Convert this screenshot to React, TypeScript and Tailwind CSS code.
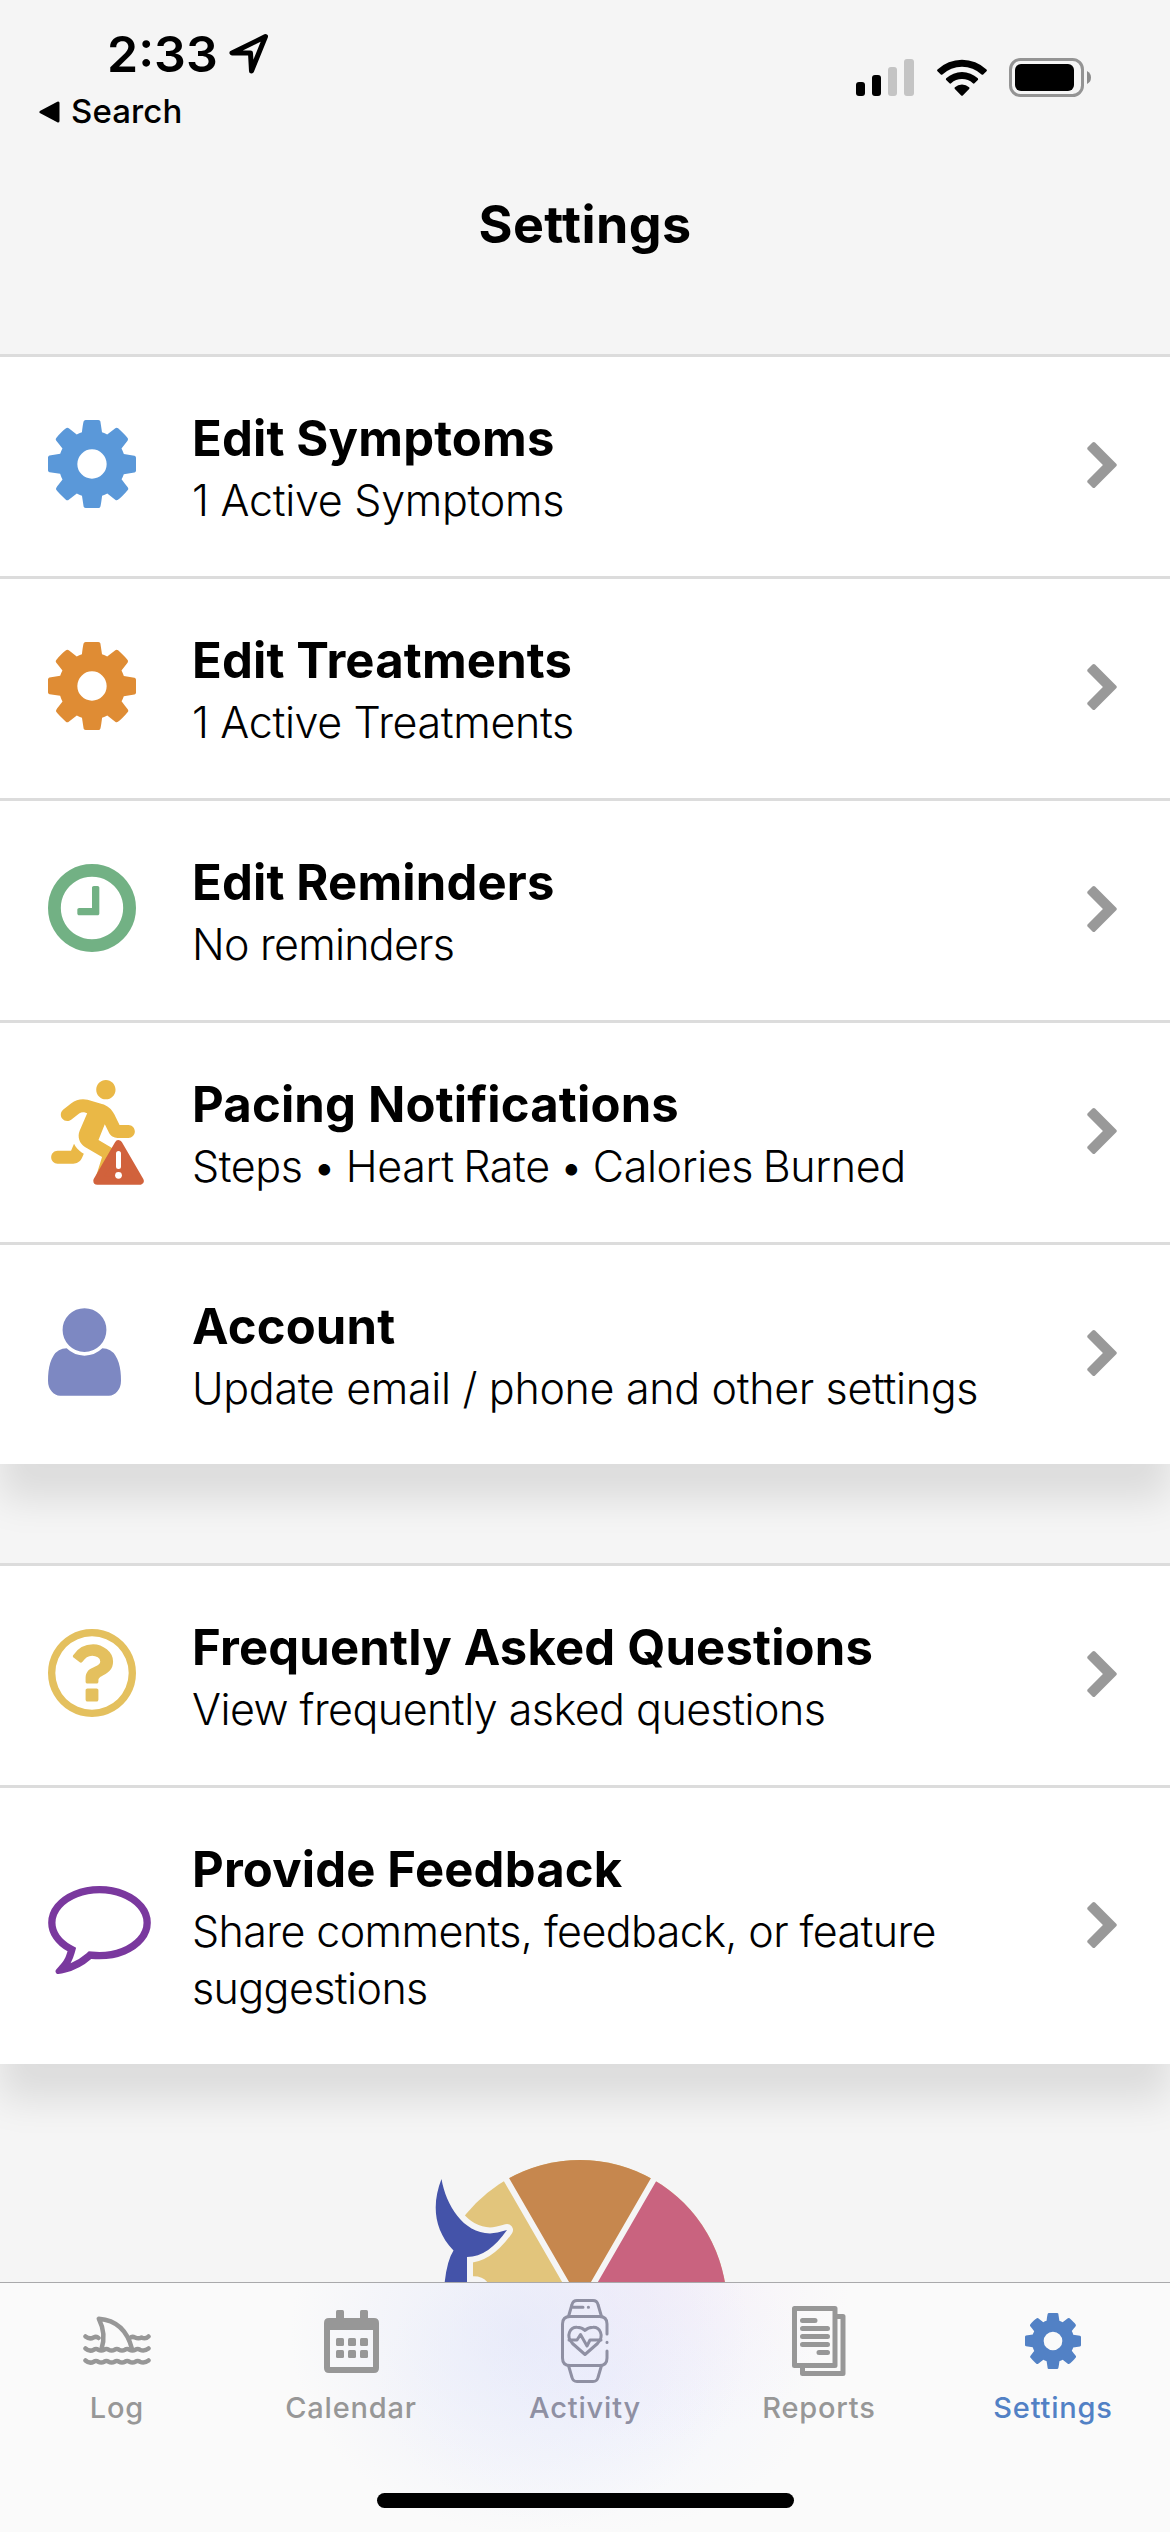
import type { ReactNode } from "react";
import { FaRunning } from "react-icons/fa";

const COG =
  "M1152 896q0-106-75-181t-181-75-181 75-75 181 75 181 181 75 181-75 75-181zm512-109v222q0 12-8 23t-20 13l-185 28q-19 54-39 91 35 50 107 138 10 12 10 25t-9 23q-27 37-99 108t-94 71q-12 0-26-9l-138-108q-44 23-91 38-16 136-29 186-7 28-36 28h-222q-14 0-24.5-8.5t-11.5-21.5l-28-184q-49-16-90-37l-141 107q-10 9-25 9-14 0-25-11-126-114-165-168-7-10-7-23 0-12 8-23 15-21 51-66.5t54-70.5q-27-50-41-99l-183-27q-13-2-21-12.5t-8-23.5v-222q0-12 8-23t19-13l186-28q14-46 39-92-40-57-107-138-10-12-10-24 0-10 9-23 26-36 98.5-107.5t94.5-71.5q13 0 26 10l138 107q44-23 91-38 16-136 29-186 7-28 36-28h222q14 0 24.5 8.5t11.5 21.5l28 184q49 16 90 37l142-107q9-9 24-9 13 0 25 10 129 119 165 170 7 8 7 22 0 12-8 23-15 21-51 66.5t-54 70.5q26 50 41 98l183 28q13 2 21 12.5t8 23.5z";

function Cog({ className }: { className: string }) {
  return (
    <svg viewBox="128 128 1536 1536" fill="currentColor" className={className}>
      <path d={COG} />
    </svg>
  );
}

function Clock() {
  return (
    <svg viewBox="128 128 1536 1536" fill="currentColor" className="mb-[6px] size-[88px] text-[#72b184]">
      <path d="M1024 544v448q0 14-9 23t-23 9h-320q-14 0-23-9t-9-23v-64q0-14 9-23t23-9h224v-352q0-14 9-23t23-9h64q14 0 23 9t9 23zm416 352q0-148-73-273t-198-198-273-73-273 73-198 198-73 273 73 273 198 198 273 73 273-73 198-198 73-273zm224 0q0 209-103 385.5t-279.5 279.5-385.5 103-385.5-103-279.5-279.5-103-385.5 103-385.5 279.5-279.5 385.5-103 385.5 103 279.5 279.5 103 385.5z" />
    </svg>
  );
}

function Question() {
  return (
    <svg viewBox="0 128 1536 1536" fill="currentColor" className="mb-[6px] size-[88px] text-[#e4c05e]">
      <path d="M880 1200v160q0 14-9 23t-23 9h-160q-14 0-23-9t-9-23v-160q0-14 9-23t23-9h160q14 0 23 9t9 23zM1136 696q0 50-15 90t-45.5 69-52 44-59.5 36q-32 18-46.5 28t-26 24-11.5 29v32q0 14-9 23t-23 9h-160q-14 0-23-9t-9-23v-68q0-35 10.5-64.5t24-47.5 39-35.5 41-25.5 44.5-21q53-25 75-43t22-49q0-42-43.5-71.5t-95.5-29.5q-56 0-95 27-29 20-80 83-9 12-25 12-11 0-19-6l-108-82q-10-7-12-20t5-23q122-192 349-192 129 0 238.5 89.5t109.5 214.5zM768 256q-130 0-248.5 51t-204 136.5-136.5 204-51 248.5 51 248.5 136.5 204 204 136.5 248.5 51 248.5-51 204-136.5 136.5-204 51-248.5-51-248.5-136.5-204-204-136.5-248.5-51zM1536 896q0 209-103 385.5t-279.5 279.5-385.5 103-385.5-103-279.5-279.5-103-385.5 103-385.5 279.5-279.5 385.5-103 385.5 103 279.5 279.5 103 385.5z" />
    </svg>
  );
}

function Comment() {
  return (
    <svg viewBox="0 256 1792 1536" fill="currentColor" className="mt-[7px] h-[88px] w-[103px] shrink-0 text-[#7a389e]">
      <path d="M896 384q-204 0-381.5 69.5t-282 187.5-104.5 255q0 112 71.5 213.5t201.5 175.5l87 50-27 96q-24 91-70 172 152-63 275-171l43-38 57 6q69 8 130 8 204 0 381.5-69.5t282-187.5 104.5-255-104.5-255-282-187.5-381.5-69.5zm896 512q0 174-120 321.5t-326 233-450 85.5q-70 0-145-8-198 175-460 242-49 14-114 22h-5q-15 0-27-10.5t-16-27.5v-1q-3-4-.5-12t2-10 4.5-9.5l6-9 7-8.5 8-9q7-8 31-34.5t34.5-38 31-39.5 32.5-51 27-59 26-76q-157-89-247.5-220t-90.5-281q0-174 120-321.5t326-233 450-85.5 450 85.5 326 233 120 321.5z" />
    </svg>
  );
}

function Person() {
  return (
    <svg viewBox="256 128 1280 1536" fill="currentColor" className="mb-[6px] h-[88px] w-[73px] text-[#7d88c2]">
      <path d="M1536 1399q0 109-62.5 187t-150.5 78h-854q-88 0-150.5-78t-62.5-187q0-85 8.5-160.5t31.5-152 58.5-131 94-89 134.5-34.5q131 128 313 128t313-128q76 0 134.5 34.5t94 89 58.5 131 31.5 152 8.5 160.5zm-256-887q0 159-112.5 271.5t-271.5 112.5-271.5-112.5-112.5-271.5 112.5-271.5 271.5-112.5 271.5 112.5 112.5 271.5z" />
    </svg>
  );
}

function Pacing() {
  return (
    <div className="relative h-[105px] w-[97px]">
      <FaRunning className="absolute top-0 left-[3px] h-[103px] w-[84px] text-[#eab846]" />
      <svg viewBox="0 0 51 45" className="absolute top-[60px] left-[45px] h-[45px] w-[51px]">
        <path d="M25.5 4.200 46.700 40.800H4.300z" fill="#d1623c" stroke="#d1623c" strokeWidth="8" strokeLinejoin="round" />
        <path d="M25.500 13.500v13" stroke="#fff" strokeWidth="5" strokeLinecap="round" />
        <circle cx="25.500" cy="35.300" r="3.400" fill="#fff" />
      </svg>
    </div>
  );
}

function Chevron() {
  return (
    <svg viewBox="346 26 1036 1612" fill="#999999" className="mb-[3px] h-[46px] w-[30px] shrink-0">
      <path d="M1363 877l-742 742q-19 19-45 19t-45-19l-166-166q-19-19-19-45t19-45l531-531-531-531q-19-19-19-45t19-45l166-166q19-19 45-19t45 19l742 742q19 19 19 45t-19 45z" />
    </svg>
  );
}

type RowProps = { icon: ReactNode; title: string; text: string; textClass: string };

function Row({ icon, title, text, textClass }: RowProps) {
  return (
    <div className="flex items-center border-t-[3px] border-[#dcdcdc] bg-white py-[47px] pr-[53px] pl-12">
      <div className="flex w-36 shrink-0 items-center">{icon}</div>
      <div className="w-[800px] pt-[3px]">
        <h2 className="mb-px text-[49px] leading-[64px] font-bold tracking-[0.17px]">{title}</h2>
        <p className={`text-[43px] leading-[57px] font-light ${textClass}`}>{text}</p>
      </div>
      <div className="ml-auto flex">
        <Chevron />
      </div>
    </div>
  );
}

function StatusBar() {
  return (
    <header className="flex h-[140px] justify-between">
      <div className="flex flex-col">
        <div className="mt-[24px] ml-[107px] flex h-[60px] items-center">
          <span className="text-[50px] leading-[60px] font-semibold">2:33</span>
          <svg viewBox="0 0 44 46" className="ml-[10px] h-[46px] w-[44px]" fill="none" stroke="#000" strokeWidth="5" strokeLinejoin="round">
            <path d="M37.500 5.500 4 22h18.500l1 18z" />
          </svg>
        </div>
        <div className="mt-[3px] ml-[39px] flex h-[48px] items-center">
          <svg viewBox="0 0 21 22" className="mt-[1px] h-[22px] w-[21px]">
            <path d="M2 11 19 2v18z" stroke="#000" strokeWidth="3" strokeLinejoin="round" />
          </svg>
          <span className="ml-[11px] text-[33px] leading-[48px] font-medium tracking-[0.1px]">Search</span>
        </div>
      </div>
      <div className="mt-[58px] mr-[79px] flex h-[39px] items-center">
        <svg viewBox="0 0 58 37" className="h-[37px] w-[58px]">
          <rect x="0" y="23" width="9" height="14" rx="3" />
          <rect x="16" y="16" width="9" height="21" rx="3" />
          <rect x="32" y="8" width="9" height="29" rx="3" fill="#c4c4c4" />
          <rect x="48" y="0" width="10" height="37" rx="3" fill="#c4c4c4" />
        </svg>
        <svg viewBox="0 0 50 37" className="ml-[22.5px] h-[37px] w-[50px]">
          <path d="M0.500 10.500a35.500 35.500 0 0 1 49 0q.8.900 0 1.700l-3.300 3.300q-.8.700-1.600 0a28.500 28.500 0 0 0-39.200 0q-.8.700-1.600 0L.5 12.200q-.8-.8 0-1.700z" />
          <path d="M9.200 19.300a23.300 23.300 0 0 1 31.600 0q.8.900 0 1.700l-3.300 3.300q-.8.700-1.600 0a16.300 16.300 0 0 0-21.800 0q-.8.700-1.600 0L9.200 21q-.8-.8 0-1.700z" />
          <path d="M17.900 28.200a11 11 0 0 1 14.200 0q.8.800 0 1.700l-6.300 6.500q-.8.700-1.600 0l-6.300-6.500q-.8-.9 0-1.700z" />
        </svg>
        <svg viewBox="0 0 82 39" className="ml-[22.5px] h-[39px] w-[82px]">
          <rect x="1.500" y="1.500" width="72" height="36" rx="10" fill="none" stroke="#949494" strokeWidth="3" />
          <rect x="6" y="6" width="59" height="27" rx="6" />
          <path d="M78 13q4 2 4 6.500T78 26z" fill="#8c8c8c" />
        </svg>
      </div>
    </header>
  );
}

function WheelLogo() {
  return (
    <svg viewBox="430 2155 300 127" className="ml-[430px] h-[127px] w-[300px]">
      <circle cx="580" cy="2307" r="147" fill="#e2c57c" />
      <path d="M580 2307 506.500 2179.700A147 147 0 0 1 653.500 2179.700z" fill="#c6874e" />
      <path d="M580 2307 653.500 2179.700A147 147 0 0 1 727 2307z" fill="#c9637f" />
      <path d="M500 2168.400 580 2307 660 2168.400" fill="none" stroke="#f5f5f5" strokeWidth="6" />
      <path
        d="M441.500 2179C446 2205 463 2233 490 2233.500Q497 2233 507 2230C495 2247 482 2257 467 2257V2290H430V2179Z"
        fill="#f5f5f5"
        stroke="#f5f5f5"
        strokeWidth="12"
        strokeLinejoin="round"
      />
      <path d="M466 2277Q482 2274 488 2283H466z" fill="#f5f5f5" />
      <path
        d="M441.500 2179C446 2205 463 2233 490 2233.500Q497 2233 507 2230C495 2247 482 2257 467 2257V2290H444Q446 2262 453.500 2250.500C433 2229 432 2203 441.500 2179z"
        fill="#4453a9"
      />
    </svg>
  );
}

function SharkIcon() {
  return (
    <svg viewBox="0 0 68 50" className="h-[50px] w-[68px]" fill="none" stroke="currentColor" strokeWidth="4.5" strokeLinecap="round" strokeLinejoin="round">
      <path d="M18.500 33Q23.500 18 15.800 2.800 42 5 49 33" />
      <path d="M2.500 20.500q4 3.200 8 1 3-1.500 5 .5M47 22q2-2 5-.5 3.500 1.700 6.500 0 4 2 7-1" />
      <path d="M2.500 32.500q4 3.500 8.300 1.200 2.200-1.500 4.400 0 3 1.700 6 0 2.200-1.500 4.400 0 3 1.700 6 0 2.200-1.500 4.400 0 3 1.700 6 0 2.200-1.500 4.400 0 3 1.700 6 0 2.200-1.500 4.400 0 4.600 2 8.700-1.200" />
      <path d="M2.500 44.500q4 3.500 8.300 1.200 2.200-1.500 4.400 0 3 1.700 6 0 2.200-1.500 4.400 0 3 1.700 6 0 2.200-1.500 4.400 0 3 1.700 6 0 2.200-1.500 4.400 0 3 1.700 6 0 2.200-1.500 4.400 0 4.600 2 8.700-1.200" />
    </svg>
  );
}

function CalendarIcon() {
  return (
    <svg viewBox="0 0 55 63" className="h-[63px] w-[55px]" fill="currentColor">
      <rect x="12" y="0" width="8" height="12" rx="1.500" />
      <rect x="36" y="0" width="8" height="12" rx="1.500" />
      <path fillRule="evenodd" d="M5 8h45q5 0 5 5v45q0 5-5 5H5q-5 0-5-5V13q0-5 5-5zM6 20v37h43V20z" />
      <rect x="12" y="28" width="8" height="8" rx="1.500" />
      <rect x="24" y="28" width="8" height="8" rx="1.500" />
      <rect x="36" y="28" width="8" height="8" rx="1.500" />
      <rect x="12" y="40" width="8" height="8" rx="1.500" />
      <rect x="24" y="40" width="8" height="8" rx="1.500" />
      <rect x="36" y="40" width="8" height="8" rx="1.500" />
    </svg>
  );
}

function WatchIcon() {
  return (
    <svg viewBox="0 0 48 84" className="h-[84px] w-[48px]" fill="none" stroke="currentColor" strokeWidth="3" strokeLinecap="round" strokeLinejoin="round">
      <path d="M7.500 17.500 11 5.500Q12 1.500 16 1.500H32Q36 1.500 37 5.500L40.500 17.500" />
      <path d="M7.500 66.500 11 78.500Q12 82.500 16 82.500H32Q36 82.500 37 78.500L40.500 66.500" />
      <path d="M12 8.300h10M27.300 8.300h.2" />
      <path d="M46 35V25q0-7.500-7.500-7.500H9Q1.500 17.500 1.500 25V59Q1.500 66.500 9 66.500H38.500Q46 66.500 46 59V52M46 43.300v.1" />
      <path d="M24 55.500 11.500 44.500C4 36.500 9.500 28 16 28.300Q21 28.300 24 31.500 27 28.300 32 28.300C38.500 28 44 36.500 36.500 44.500Z" />
      <path d="M8 41h8l3.500-5.500 6.500 11.500 3-6h11" />
    </svg>
  );
}

function ReportsIcon() {
  return (
    <svg viewBox="0 0 54 70" className="h-[70px] w-[54px]" fill="none" stroke="currentColor" strokeWidth="5" strokeLinejoin="round">
      <rect x="2.500" y="2.500" width="40.500" height="57" />
      <path d="M10.500 60v7.500h40.500V10.500H43" />
      <path d="M10.500 14.500h12.500M10.500 22.500h25M10.500 30.500h25M10.500 38.500h25M27 46.500h8.500" strokeLinecap="round" />
    </svg>
  );
}

type TabProps = { icon: ReactNode; label: string; active?: boolean; tinted?: boolean };

function Tab({ icon, label, active = false, tinted = false }: TabProps) {
  const color = active ? "text-[#5281c5]" : tinted ? "text-[#8f90a3]" : "text-[#979797]";
  return (
    <div className={`flex w-[234px] flex-col items-center ${color}`}>
      <div className="mt-[14px] flex h-[88px] items-center">{icon}</div>
      <span className="mt-[3px] text-[29px] leading-[40px] font-medium tracking-[0.8px]">{label}</span>
    </div>
  );
}

export default function App() {
  return (
    <div className="flex h-[2532px] w-[1170px] flex-col overflow-hidden bg-[#f5f5f5] font-['Inter',sans-serif] text-black">
      <StatusBar />
      <h1 className="mt-[54px] h-[160px] text-center text-[52px] leading-[62px] font-bold tracking-[0.4px]">Settings</h1>

      <section className="shadow-[0_36px_36px_rgba(0,0,0,0.1)]">
        <Row
          icon={<Cog className="mb-[6px] size-[88px] text-[#5a98d9]" />}
          title="Edit Symptoms"
          text="1 Active Symptoms"
          textClass="tracking-[-0.28px]"
        />
        <Row
          icon={<Cog className="mb-[6px] size-[88px] text-[#df8c34]" />}
          title="Edit Treatments"
          text="1 Active Treatments"
          textClass="tracking-[-0.35px]"
        />
        <Row icon={<Clock />} title="Edit Reminders" text="No reminders" textClass="tracking-[-0.75px]" />
        <Row
          icon={<Pacing />}
          title="Pacing Notifications"
          text="Steps • Heart Rate • Calories Burned"
          textClass="tracking-[-0.4px] [word-spacing:-2px]"
        />
        <Row
          icon={<Person />}
          title="Account"
          text="Update email / phone and other settings"
          textClass="tracking-[-0.33px]"
        />
      </section>

      <section className="mt-[99px] shadow-[0_36px_36px_rgba(0,0,0,0.1)]">
        <Row
          icon={<Question />}
          title="Frequently Asked Questions"
          text="View frequently asked questions"
          textClass="tracking-[-0.53px]"
        />
        <Row
          icon={<Comment />}
          title="Provide Feedback"
          text="Share comments, feedback, or feature suggestions"
          textClass="tracking-[-0.6px]"
        />
      </section>

      <div className="mt-auto">
        <WheelLogo />
      </div>

      <nav className="h-[250px] shrink-0 border-t border-[#a9a9ab] bg-[#fafafa] bg-[radial-gradient(ellipse_230px_200px_at_520px_50px,rgba(226,230,249,0.65),transparent),radial-gradient(ellipse_200px_160px_at_650px_0px,rgba(240,230,247,0.5),transparent),radial-gradient(ellipse_220px_150px_at_600px_100px,rgba(236,239,255,0.6),transparent)]">
        <div className="flex h-[210px]">
          <Tab icon={<SharkIcon />} label="Log" />
          <Tab icon={<CalendarIcon />} label="Calendar" />
          <Tab icon={<WatchIcon />} label="Activity" tinted />
          <Tab icon={<ReportsIcon />} label="Reports" />
          <Tab icon={<Cog className="size-[56px]" />} label="Settings" active />
        </div>
        <div className="mx-auto h-[15px] w-[417px] rounded-full bg-black" />
      </nav>
    </div>
  );
}
